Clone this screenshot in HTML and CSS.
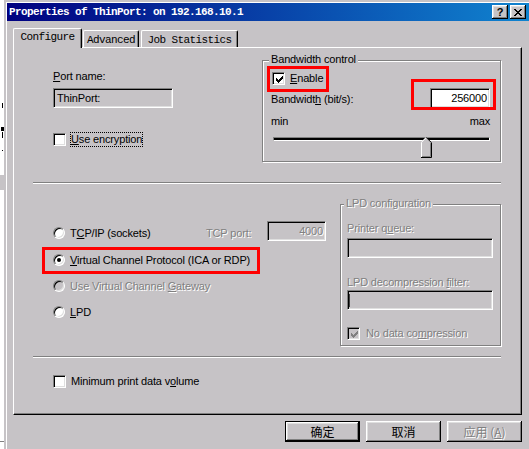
FILE: index.html
```
<!DOCTYPE html>
<html>
<head>
<meta charset="utf-8">
<title>Properties of ThinPort</title>
<link rel="stylesheet" href="styles.css">
</head>
<body>
<div class="screen">
  <div class="bgwin">
    <span class="mark mark-1"></span>
    <span class="mark mark-2"></span>
    <span class="mark mark-3"></span>
    <span class="mark mark-4"></span>
    <span class="bgblock"></span>
    <span class="mark mark-5"></span>
  </div>
  <div class="dialog">
    <div class="titlebar">
      <span class="title">Properties of ThinPort: on 192.168.10.1</span>
      <span class="tbtn tbtn-help">?</span>
      <span class="tbtn tbtn-close">
        <svg width="8" height="7" viewBox="0 0 8 7" shape-rendering="crispEdges"><path fill="#000" d="M0 0h2v1h-2z M6 0h2v1h-2z M1 1h2v1h-2z M5 1h2v1h-2z M2 2h4v1h-4z M3 3h2v1h-2z M2 4h4v1h-4z M1 5h2v1h-2z M5 5h2v1h-2z M0 6h2v1h-2z M6 6h2v1h-2z"/></svg>
      </span>
    </div>

    <div class="tabs">
      <div class="tab tab-active">Configure</div>
      <div class="tab tab-adv">Advanced</div>
      <div class="tab tab-job">Job Statistics</div>
    </div>

    <div class="panel">
      <div class="top-row">
        <div class="port-col">
          <div class="lbl lbl-port"><u>P</u>ort name:</div>
          <div class="field field-ro field-port">ThinPort:</div>
          <div class="check-row enc-row">
            <span class="cbox"></span>
            <span class="clabel focus"><u>U</u>se encryption</span>
          </div>
        </div>
        <div class="group bw-group">
          <span class="legend bw-legend">Bandwidth control</span>
          <div class="check-row enable-row">
            <span class="cbox">
              <svg width="7" height="7" viewBox="0 0 7 7" shape-rendering="crispEdges"><path fill="#000" d="M0 2h1v3h-1z M1 3h1v3h-1z M2 4h1v3h-1z M3 3h1v3h-1z M4 2h1v3h-1z M5 1h1v3h-1z M6 0h1v3h-1z"/></svg>
            </span>
            <span class="clabel"><u>E</u>nable</span>
          </div>
          <div class="bw-row">
            <span class="lbl bw-lbl">Bandwidt<u>h</u> (bit/s):</span>
            <span class="field field-bw">256000</span>
          </div>
          <div class="range-labels"><span>min</span><span>max</span></div>
          <div class="slider">
            <div class="track"></div>
            <svg class="thumb" width="11" height="21" viewBox="0 0 11 21">
              <path d="M0 21V5L5 0L11 6V21Z" fill="#c6c3c6"/>
              <path d="M0.5 20V5.3L5.3 0.5" stroke="#fff" fill="none"/>
              <path d="M5.3 0.5L10.5 5.7V20.5H0" stroke="#000" fill="none"/>
              <path d="M9.5 6.2V19.5H1" stroke="#808080" fill="none"/>
            </svg>
          </div>
        </div>
      </div>

      <div class="sep sep1"></div>

      <div class="mid-row">
        <div class="proto-col">
          <div class="radio-row tcp-row">
            <div class="tcp-main">
              <span class="radio"></span>
              <span class="clabel">T<u>C</u>P/IP (sockets)</span>
            </div>
            <span class="lbl dis tcp-port">TCP port:</span>
            <span class="field field-dis field-4000">4000</span>
          </div>
          <div class="radio-row vcp-row">
            <span class="radio radio-on"><span class="dot"></span></span>
            <span class="clabel"><u>V</u>irtual Channel Protocol (ICA or RDP)</span>
          </div>
          <div class="radio-row gw-row">
            <span class="radio radio-dis"></span>
            <span class="clabel dis">Use Virtual Channel <u>G</u>ateway</span>
          </div>
          <div class="radio-row lpd-row">
            <span class="radio"></span>
            <span class="clabel"><u>L</u>PD</span>
          </div>
        </div>
        <div class="group lpd-group">
          <span class="legend lpd-legend dis">LPD configuration</span>
          <div class="lbl dis lpd-q-lbl">Printer q<u>u</u>eue:</div>
          <div class="field field-dis field-lpd"></div>
          <div class="lbl dis lpd-f-lbl">LPD decompression <u>f</u>ilter:</div>
          <div class="field field-dis field-lpd field-lpd2"><span class="caret"></span></div>
          <div class="check-row nodata-row">
            <span class="cbox cbox-dis">
              <svg width="7" height="7" viewBox="0 0 7 7" shape-rendering="crispEdges"><path fill="#808080" d="M0 2h1v3h-1z M1 3h1v3h-1z M2 4h1v3h-1z M3 3h1v3h-1z M4 2h1v3h-1z M5 1h1v3h-1z M6 0h1v3h-1z"/></svg>
            </span>
            <span class="clabel dis nodata-lbl">No data co<u>m</u>pression</span>
          </div>
        </div>
      </div>

      <div class="sep sep2"></div>

      <div class="check-row min-row">
        <span class="cbox"></span>
        <span class="clabel">Minimum print data v<u>o</u>lume</span>
      </div>

      <div class="redbox rb-enable"></div>
      <div class="redbox rb-bw"></div>
      <div class="redbox rb-vcp"></div>
    </div>

    <div class="buttons">
      <span class="btn btn-default">确定</span>
      <span class="btn">取消</span>
      <span class="btn btn-dis">应用 (<u>A</u>)</span>
    </div>
  </div>
</div>
</body>
</html>
```

FILE: styles.css
```
* { box-sizing: border-box; }

html, body {
  margin: 0;
  padding: 0;
}

body {
  width: 529px;
  height: 449px;
  overflow: hidden;
  background: #fff;
  font-family: "Liberation Sans", Arial, sans-serif;
  font-size: 11px;
  letter-spacing: -0.15px;
  color: #000;
}

u { text-decoration: underline; text-underline-offset: 1px; }

.screen {
  display: flex;
  width: 529px;
  height: 449px;
  overflow: hidden;
}

/* background window strip on the far left */
.bgwin {
  flex: none;
  width: 4px;
  height: 449px;
  background: #fff;
  position: relative;
}
.mark { position: absolute; background: #000; width: 1px; }
.mark-1 { left: 2px; top: 103px; height: 5px; }
.mark-2 { left: 1px; top: 127px; height: 4px; width: 3px; }
.mark-3 { left: 2px; top: 132px; height: 6px; }
.mark-4 { left: 2px; top: 150px; height: 1px; }
.mark-5 { left: 0; top: 441px; height: 1px; width: 4px; background: #808080; }
.bgblock { position: absolute; left: 0; top: 175px; width: 4px; height: 15px; background: #c6c3c6; }

.dialog {
  flex: none;
  width: 540px;
  height: 449px;
  background: #c6c3c6;
  border-left: 2px solid #c6c3c6;
  border-top: 2px solid #c6c3c6;
  box-shadow: inset 1px 1px #fff;
  padding: 1px 0 0 1px;
  display: flex;
  flex-direction: column;
}

/* title bar */
.titlebar {
  flex: none;
  width: 525px;
  height: 18px;
  display: flex;
  align-items: center;
  padding: 0 6px 0 2px;
  background: linear-gradient(90deg, #000080 0%, #1084d0 100%);
}
.title {
  flex: 1;
  color: #fff;
  font-family: "Liberation Mono", "DejaVu Sans Mono", monospace;
  font-weight: bold;
  font-size: 11px;
  letter-spacing: -0.6px;
  line-height: 18px;
  white-space: nowrap;
}
.tbtn {
  flex: none;
  width: 16px;
  height: 14px;
  background: #c6c3c6;
  box-shadow: inset -1px -1px #000, inset 1px 1px #fff, inset -2px -2px #808080, inset 2px 2px #dfdfdf;
  display: flex;
  align-items: center;
  justify-content: center;
}
.tbtn-help {
  margin-right: 2px;
  font-family: "Liberation Sans", Arial, sans-serif;
  font-weight: bold;
  font-size: 11px;
  letter-spacing: 0;
  line-height: 12px;
  color: #000;
}
.tbtn-close svg { display: block; margin-top: 0; }

/* tabs */
.tabs {
  flex: none;
  display: flex;
  align-items: flex-end;
  height: 19px;
  margin-top: 7px;
  margin-left: 6px;
}
.tab {
  height: 17px;
  background: #c6c3c6;
  border-top: 1px solid #fff;
  border-left: 1px solid #fff;
  border-right: 1px solid #000;
  box-shadow: inset -1px 0 #808080;
  border-top-left-radius: 2px;
  border-top-right-radius: 2px;
  display: flex;
  justify-content: center;
  padding-top: 3px;
  font-family: "Liberation Mono", "DejaVu Sans Mono", monospace;
  font-size: 11px;
  letter-spacing: -0.6px;
  line-height: 13px;
  white-space: nowrap;
}
.tab-active {
  width: 69px;
  height: 20px;
  margin-bottom: -1px;
  padding-top: 2px;
  position: relative;
  z-index: 1;
}
.tab-adv { width: 56px; margin-left: 1px; }
.tab-job { width: 97px; margin-left: 2px; }

/* panel */
.panel {
  flex: none;
  position: relative;
  width: 509px;
  height: 368px;
  margin-left: 6px;
  border-top: 1px solid #fff;
  border-left: 1px solid #fff;
  border-right: 1px solid #000;
  border-bottom: 1px solid #000;
  box-shadow: inset -1px -1px #808080;
}

.lbl { line-height: 13px; white-space: nowrap; }
.dis { color: #808080; text-shadow: 1px 1px #fff; }

.top-row { display: flex; align-items: flex-start; }
.port-col { width: 209px; margin-left: 39px; }
.lbl-port { margin-top: 22px; }

.field {
  display: flex;
  align-items: center;
  height: 20px;
  border-top: 1px solid #808080;
  border-left: 1px solid #808080;
  border-right: 1px solid #fff;
  border-bottom: 1px solid #fff;
  box-shadow: inset 1px 1px #000, inset -1px -1px #dfdfdf;
  background: #fff;
  white-space: nowrap;
}
.field-ro { background: #c6c3c6; }
.field-dis { background: #c6c3c6; color: #808080; text-shadow: 1px 1px #fff; }
.field-port { width: 120px; margin-top: 5px; padding-left: 3px; }

.check-row { display: flex; align-items: center; height: 15px; }
.enc-row { margin-top: 24px; }

.cbox {
  flex: none;
  width: 13px;
  height: 13px;
  background: #fff;
  border-top: 1px solid #808080;
  border-left: 1px solid #808080;
  border-right: 1px solid #fff;
  border-bottom: 1px solid #fff;
  box-shadow: inset 1px 1px #000, inset -1px -1px #dfdfdf;
  display: flex;
  align-items: center;
  justify-content: center;
}
.cbox svg { display: block; margin: 1px 0 0 1px; }
.cbox-dis { background: #c6c3c6; }

.clabel {
  margin-left: 4px;
  border: 1px solid transparent;
  line-height: 13px;
  white-space: nowrap;
}
.focus { border: 1px dotted #000; }

/* bandwidth group */
.group {
  position: relative;
  border: 1px solid #808080;
  box-shadow: inset 1px 1px #fff, 1px 1px #fff;
}
.legend {
  position: absolute;
  top: -8px;
  padding: 0 2px;
  background: #c6c3c6;
  line-height: 13px;
  white-space: nowrap;
}
.bw-group {
  flex: none;
  width: 239px;
  height: 102px;
  margin-top: 12px;
}
.bw-legend { left: 6px; }
.enable-row { margin-top: 10px; margin-left: 9px; }
.bw-row {
  display: flex;
  align-items: flex-start;
  justify-content: space-between;
  height: 20px;
  margin-top: 2px;
  padding: 0 10px 0 8px;
}
.bw-lbl { margin-top: 5px; }
.field-bw { width: 60px; justify-content: flex-end; padding-right: 2px; }
.range-labels {
  display: flex;
  justify-content: space-between;
  line-height: 13px;
  margin-top: 7px;
  padding: 0 10px 0 8px;
}
.slider {
  position: relative;
  width: 217px;
  height: 21px;
  margin-top: 4px;
  margin-left: 10px;
}
.track {
  height: 4px;
  margin-top: 9px;
  border-top: 1px solid #808080;
  border-left: 1px solid #808080;
  border-bottom: 1px solid #fff;
  border-right: 1px solid #fff;
  background: #000;
}
.thumb { position: absolute; left: 148px; top: 0; display: block; }

/* separators */
.sep {
  width: 468px;
  height: 2px;
  margin-left: 19px;
  border-top: 1px solid #808080;
  border-bottom: 1px solid #fff;
}
.sep1 { margin-top: 20px; }
.sep2 { margin-top: 10px; }

/* protocol section */
.mid-row { display: flex; align-items: flex-start; }
.proto-col { width: 287px; margin-left: 39px; }
.radio-row { display: flex; align-items: flex-start; height: 15px; }
.tcp-row { height: 20px; margin-top: 37px; }
.tcp-main { display: flex; align-items: flex-start; width: 153px; }
.tcp-row .radio { margin-top: 6px; }
.tcp-row .clabel { margin-top: 5px; }
.tcp-port { width: 61px; margin-top: 6px; }
.field-4000 { width: 59px; justify-content: flex-end; padding-right: 2px; }
.vcp-row { margin-top: 12px; }
.gw-row { margin-top: 11px; }
.lpd-row { margin-top: 11px; }

.radio {
  flex: none;
  position: relative;
  width: 12px;
  height: 12px;
  margin-top: 1px;
  border-radius: 50%;
  background: #fff;
  border-top: 1px solid #808080;
  border-left: 1px solid #808080;
  border-right: 1px solid #fff;
  border-bottom: 1px solid #fff;
  box-shadow: inset 1px 1px #000, inset -1px -1px #dfdfdf;
}
.radio-dis { background: #c6c3c6; }
.radio-on .dot {
  position: absolute;
  left: 3px;
  top: 3px;
  width: 4px;
  height: 4px;
  border-radius: 50%;
  background: #000;
}

/* LPD group */
.lpd-group {
  flex: none;
  width: 161px;
  height: 142px;
  margin-top: 20px;
  padding-left: 6px;
}
.lpd-legend { left: 3px; }
.lpd-q-lbl { margin-top: 17px; }
.field-lpd { width: 146px; margin-top: 3px; }
.lpd-f-lbl { margin-top: 18px; }
.field-lpd2 { margin-top: 1px; }
.caret { display: block; width: 1px; height: 13px; margin-left: 1px; background: #404040; }
.nodata-row { margin-top: 16px; }
.nodata-lbl { margin-left: 5px; }

.min-row { margin-top: 16px; margin-left: 39px; }

/* red annotation frames */
.redbox { position: absolute; border: 3px solid #f00; }
.rb-enable { left: 253px; top: 18px; width: 62px; height: 26px; }
.rb-bw { left: 397px; top: 31px; width: 85px; height: 31px; }
.rb-vcp { left: 28px; top: 199px; width: 218px; height: 27px; }

/* buttons */
.buttons {
  flex: none;
  display: flex;
  justify-content: flex-end;
  gap: 6px;
  width: 515px;
  margin-top: 6px;
}
.btn {
  width: 75px;
  height: 21px;
  display: flex;
  align-items: center;
  justify-content: center;
  font-family: "Noto Sans CJK SC", "Liberation Sans", sans-serif;
  font-size: 12px;
  letter-spacing: 0;
  line-height: 14px;
  background: #c6c3c6;
  box-shadow: inset -1px -1px #000, inset 1px 1px #fff, inset -2px -2px #808080, inset 2px 2px #dfdfdf;
  white-space: nowrap;
}
.btn-default {
  border: 1px solid #000;
}
.btn-dis { color: #808080; text-shadow: 1px 1px #fff; }
```
